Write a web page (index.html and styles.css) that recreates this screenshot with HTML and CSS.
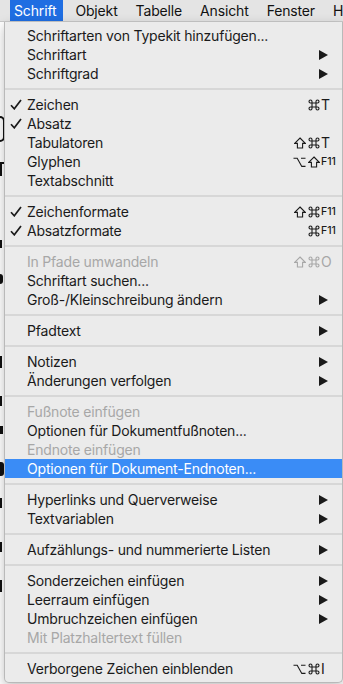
FILE: index.html
```html
<!DOCTYPE html>
<html>
<head>
    <meta charset="UTF-8">
    <title>Schrift-Menü</title>
    <link rel="stylesheet" href="styles.css">
</head>
<body>
    <div class="screen">
        <!-- Menu bar -->
        <div class="menubar">
            <span class="title active">Schrift</span>
            <span class="title">Objekt</span>
            <span class="title">Tabelle</span>
            <span class="title">Ansicht</span>
            <span class="title">Fenster</span>
            <span class="title">H</span>
        </div>

        <!-- Document behind the menu -->
        <div class="document">
            <span class="mark m1"></span>
            <span class="mark m2"></span>
            <span class="mark m3"></span>
            <span class="mark m4"></span>
            <span class="mark m5"></span>
            <span class="mark m6"></span>
            <span class="mark m7"></span>
            <span class="mark m8"></span>
            <span class="mark m9"></span>
            <span class="mark m10"></span>
            <span class="mark m11"></span>
            <span class="mark m12"></span>
        </div>

        <!-- Open menu -->
        <div class="menu">
            <div class="item"><span class="check"></span><span class="label">Schriftarten von Typekit hinzufügen...</span></div>
            <div class="item"><span class="check"></span><span class="label">Schriftart</span><span class="arrow"><svg width="9" height="10" viewBox="0 0 9 10"><polygon points="0,0 9,5 0,10"/></svg></span></div>
            <div class="item"><span class="check"></span><span class="label">Schriftgrad</span><span class="arrow"><svg width="9" height="10" viewBox="0 0 9 10"><polygon points="0,0 9,5 0,10"/></svg></span></div>
            <div class="sep"></div>

            <div class="item"><span class="check"><svg width="12" height="11" viewBox="0 0 12 11"><path d="M1 6.2 L4.3 9.8 L11 1"/></svg></span><span class="label">Zeichen</span>
                <span class="keys"><span class="mods">
                    <svg class="cmd" width="12" height="12" viewBox="0 0 12 12"><path d="M4 4V2.5A1.5 1.5 0 1 0 2.5 4H9.5A1.5 1.5 0 1 0 8 2.5V9.5A1.5 1.5 0 1 0 9.5 8H2.5A1.5 1.5 0 1 0 4 9.5Z"/></svg>
                </span><span class="key">T</span></span></div>
            <div class="item"><span class="check"><svg width="12" height="11" viewBox="0 0 12 11"><path d="M1 6.2 L4.3 9.8 L11 1"/></svg></span><span class="label">Absatz</span></div>
            <div class="item"><span class="check"></span><span class="label">Tabulatoren</span>
                <span class="keys"><span class="mods">
                    <svg class="shift" width="12" height="12" viewBox="0 0 12 12"><path d="M6 1L11.3 6.4H8.6V11H3.4V6.4H0.7Z"/></svg>
                    <svg class="cmd" width="12" height="12" viewBox="0 0 12 12"><path d="M4 4V2.5A1.5 1.5 0 1 0 2.5 4H9.5A1.5 1.5 0 1 0 8 2.5V9.5A1.5 1.5 0 1 0 9.5 8H2.5A1.5 1.5 0 1 0 4 9.5Z"/></svg>
                </span><span class="key">T</span></span></div>
            <div class="item"><span class="check"></span><span class="label">Glyphen</span>
                <span class="keys"><span class="mods">
                    <svg class="opt" width="13" height="12" viewBox="0 0 13 12"><path d="M0.5 2.2H4.2L8.8 10.4H12.5M8 2.2H12.5"/></svg>
                    <svg class="shift" width="12" height="12" viewBox="0 0 12 12"><path d="M6 1L11.3 6.4H8.6V11H3.4V6.4H0.7Z"/></svg>
                </span><span class="key small">F11</span></span></div>
            <div class="item"><span class="check"></span><span class="label">Textabschnitt</span></div>
            <div class="sep"></div>

            <div class="item"><span class="check"><svg width="12" height="11" viewBox="0 0 12 11"><path d="M1 6.2 L4.3 9.8 L11 1"/></svg></span><span class="label">Zeichenformate</span>
                <span class="keys"><span class="mods">
                    <svg class="shift" width="12" height="12" viewBox="0 0 12 12"><path d="M6 1L11.3 6.4H8.6V11H3.4V6.4H0.7Z"/></svg>
                    <svg class="cmd" width="12" height="12" viewBox="0 0 12 12"><path d="M4 4V2.5A1.5 1.5 0 1 0 2.5 4H9.5A1.5 1.5 0 1 0 8 2.5V9.5A1.5 1.5 0 1 0 9.5 8H2.5A1.5 1.5 0 1 0 4 9.5Z"/></svg>
                </span><span class="key small">F11</span></span></div>
            <div class="item"><span class="check"><svg width="12" height="11" viewBox="0 0 12 11"><path d="M1 6.2 L4.3 9.8 L11 1"/></svg></span><span class="label">Absatzformate</span>
                <span class="keys"><span class="mods">
                    <svg class="cmd" width="12" height="12" viewBox="0 0 12 12"><path d="M4 4V2.5A1.5 1.5 0 1 0 2.5 4H9.5A1.5 1.5 0 1 0 8 2.5V9.5A1.5 1.5 0 1 0 9.5 8H2.5A1.5 1.5 0 1 0 4 9.5Z"/></svg>
                </span><span class="key small">F11</span></span></div>
            <div class="sep"></div>

            <div class="item disabled"><span class="check"></span><span class="label">In Pfade umwandeln</span>
                <span class="keys"><span class="mods">
                    <svg class="shift" width="12" height="12" viewBox="0 0 12 12"><path d="M6 1L11.3 6.4H8.6V11H3.4V6.4H0.7Z"/></svg>
                    <svg class="cmd" width="12" height="12" viewBox="0 0 12 12"><path d="M4 4V2.5A1.5 1.5 0 1 0 2.5 4H9.5A1.5 1.5 0 1 0 8 2.5V9.5A1.5 1.5 0 1 0 9.5 8H2.5A1.5 1.5 0 1 0 4 9.5Z"/></svg>
                </span><span class="key">O</span></span></div>
            <div class="item"><span class="check"></span><span class="label">Schriftart suchen...</span></div>
            <div class="item"><span class="check"></span><span class="label">Groß-/Kleinschreibung ändern</span><span class="arrow"><svg width="9" height="10" viewBox="0 0 9 10"><polygon points="0,0 9,5 0,10"/></svg></span></div>
            <div class="sep"></div>

            <div class="item"><span class="check"></span><span class="label">Pfadtext</span><span class="arrow"><svg width="9" height="10" viewBox="0 0 9 10"><polygon points="0,0 9,5 0,10"/></svg></span></div>
            <div class="sep"></div>

            <div class="item"><span class="check"></span><span class="label">Notizen</span><span class="arrow"><svg width="9" height="10" viewBox="0 0 9 10"><polygon points="0,0 9,5 0,10"/></svg></span></div>
            <div class="item"><span class="check"></span><span class="label">Änderungen verfolgen</span><span class="arrow"><svg width="9" height="10" viewBox="0 0 9 10"><polygon points="0,0 9,5 0,10"/></svg></span></div>
            <div class="sep"></div>

            <div class="item disabled"><span class="check"></span><span class="label">Fußnote einfügen</span></div>
            <div class="item"><span class="check"></span><span class="label">Optionen für Dokumentfußnoten...</span></div>
            <div class="item disabled"><span class="check"></span><span class="label">Endnote einfügen</span></div>
            <div class="item selected"><span class="check"></span><span class="label">Optionen für Dokument-Endnoten...</span></div>
            <div class="sep"></div>

            <div class="item"><span class="check"></span><span class="label">Hyperlinks und Querverweise</span><span class="arrow"><svg width="9" height="10" viewBox="0 0 9 10"><polygon points="0,0 9,5 0,10"/></svg></span></div>
            <div class="item"><span class="check"></span><span class="label">Textvariablen</span><span class="arrow"><svg width="9" height="10" viewBox="0 0 9 10"><polygon points="0,0 9,5 0,10"/></svg></span></div>
            <div class="sep"></div>

            <div class="item"><span class="check"></span><span class="label">Aufzählungs- und nummerierte Listen</span><span class="arrow"><svg width="9" height="10" viewBox="0 0 9 10"><polygon points="0,0 9,5 0,10"/></svg></span></div>
            <div class="sep"></div>

            <div class="item"><span class="check"></span><span class="label">Sonderzeichen einfügen</span><span class="arrow"><svg width="9" height="10" viewBox="0 0 9 10"><polygon points="0,0 9,5 0,10"/></svg></span></div>
            <div class="item"><span class="check"></span><span class="label">Leerraum einfügen</span><span class="arrow"><svg width="9" height="10" viewBox="0 0 9 10"><polygon points="0,0 9,5 0,10"/></svg></span></div>
            <div class="item"><span class="check"></span><span class="label">Umbruchzeichen einfügen</span><span class="arrow"><svg width="9" height="10" viewBox="0 0 9 10"><polygon points="0,0 9,5 0,10"/></svg></span></div>
            <div class="item disabled"><span class="check"></span><span class="label">Mit Platzhaltertext füllen</span></div>
            <div class="sep"></div>

            <div class="item"><span class="check"></span><span class="label">Verborgene Zeichen einblenden</span>
                <span class="keys"><span class="mods">
                    <svg class="opt" width="13" height="12" viewBox="0 0 13 12"><path d="M0.5 2.2H4.2L8.8 10.4H12.5M8 2.2H12.5"/></svg>
                    <svg class="cmd" width="12" height="12" viewBox="0 0 12 12"><path d="M4 4V2.5A1.5 1.5 0 1 0 2.5 4H9.5A1.5 1.5 0 1 0 8 2.5V9.5A1.5 1.5 0 1 0 9.5 8H2.5A1.5 1.5 0 1 0 4 9.5Z"/></svg>
                </span><span class="key">I</span></span></div>
        </div>
    </div>
</body>
</html>
```

FILE: styles.css
```css
body {
    margin: 0;
    width: 343px;
    height: 684px;
    overflow: hidden;
    font-family: Inter, 'Liberation Sans', sans-serif;
    color: #1a1a1a;
    background: #fff;
}

.screen {
    position: relative;
    width: 343px;
    height: 684px;
}

/* Menu bar */
.menubar {
    height: 21px;
    border-bottom: 1px solid #c9c9c9;
    background: #e4e4e4;
    display: flex;
    align-items: stretch;
    gap: 6px;
    padding-left: 10px;
    font-size: 14px;
    letter-spacing: -0.15px;
    white-space: nowrap;
}

.title {
    display: flex;
    align-items: center;
    padding: 0 6px;
    color: #111;
}

.title.active {
    background: #1f6ee2;
    color: #fff;
    padding: 0 7px 0 4px;
}

/* Document page peeking out at the left edge */
.document {
    height: 662px;
    display: flex;
    flex-direction: column;
    align-items: flex-start;
}

.mark {
    display: block;
    background: #111;
    width: 3px;
}

.m1 { margin-top: 94px; height: 22px; width: 3px; border-radius: 0 6px 6px 0; background: none; border: 2px solid #111; border-left: none; }
.m2 { margin-top: 20px; height: 2px; width: 4px; }
.m3 { margin-top: 0; height: 12px; width: 2px; }
.m4 { margin-top: 64px; height: 8px; width: 2px; }
.m5 { margin-top: 26px; height: 10px; width: 3px; border-radius: 0 4px 4px 0; }
.m6 { margin-top: 72px; height: 12px; width: 2px; }
.m7 { margin-top: 28px; height: 10px; width: 2px; }
.m8 { margin-top: 20px; height: 8px; width: 3px; }
.m9 { margin-top: 28px; height: 14px; width: 4px; border-radius: 0 3px 3px 0; }
.m10 { margin-top: 22px; height: 10px; width: 2px; }
.m11 { margin-top: 34px; height: 10px; width: 2px; }
.m12 { margin-top: 28px; height: 12px; width: 2px; }

/* Drop-down menu */
.menu {
    position: absolute;
    top: 22px;
    left: 4px;
    width: 337px;
    padding: 4px 0;
    background: #ebebeb;
    border: 1px solid #b9b9b9;
    border-top: none;
    border-radius: 0 0 5px 5px;
    box-shadow: 0 4px 12px rgba(0,0,0,0.25);
    font-size: 14px;
    letter-spacing: -0.2px;
    white-space: nowrap;
}

.item {
    height: 19px;
    display: flex;
    align-items: center;
    padding: 0 4px 0 5px;
}

.check {
    width: 17px;
    flex-shrink: 0;
    display: flex;
    align-items: center;
}

.check svg path {
    fill: none;
    stroke: #1a1a1a;
    stroke-width: 1.7;
}

.label {
    flex-grow: 1;
}

.arrow {
    display: flex;
    margin-right: 10px;
}

.arrow svg polygon {
    fill: #1a1a1a;
}

.keys {
    display: flex;
    align-items: center;
    color: #1a1a1a;
}

.mods {
    display: flex;
    align-items: center;
    gap: 2px;
}

.mods svg path {
    fill: none;
    stroke: #1a1a1a;
    stroke-width: 1.1;
}

.key {
    width: 17px;
    padding-left: 1px;
    font-size: 14px;
    letter-spacing: 0;
}

.key.small {
    font-size: 10.5px;
    font-weight: 500;
}

.item.disabled {
    color: #a7a7a7;
}

.item.disabled .keys {
    color: #a7a7a7;
}

.item.disabled .mods svg path {
    stroke: #a7a7a7;
}

.item.selected {
    background: #3a8cf6;
    color: #fff;
}

.sep {
    height: 2px;
    margin: 5px 0;
    background: #d7d7d7;
}
```
